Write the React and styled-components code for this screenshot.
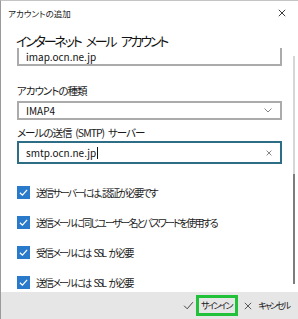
import React from 'react';
import styled, { createGlobalStyle } from 'styled-components';

const Global = createGlobalStyle`
  html, body { margin: 0; padding: 0; background: #fff; }
  body {
    font-family: "Noto Sans CJK JP", "Noto Sans", sans-serif;
    font-feature-settings: "palt";
    color: #1a1a1a;
  }
`;

const Window = styled.div`
  width: 298px;
  height: 319px;
  box-sizing: border-box;
  border-left: 1px solid #9a9a9a;
  border-top: 1px solid #c4c4c4;
  background: #fff;
  display: flex;
  flex-direction: column;
  position: relative;
  overflow: hidden;
`;

const TitleBar = styled.div`
  height: 24px;
  flex: none;
  display: flex;
  align-items: center;
  justify-content: space-between;
  padding: 0 12px 0 7px;
  font-size: 8.5px;
  color: #222;
`;

const Heading = styled.h1`
  margin: 8px 0 0 15px;
  flex: none;
  font-size: 13px;
  line-height: 15px;
  letter-spacing: -2.2px;
  word-spacing: 4.5px;
  font-weight: 400;
  color: #111;
  white-space: nowrap;
`;

const ScrollArea = styled.div`
  flex: 1;
  overflow: hidden;
  position: relative;
`;

const Content = styled.div`
  margin-top: -4px;
  padding: 0 16px 0 16px;
`;

const Field = styled.div`
  box-sizing: border-box;
  height: ${p => p.h || 20}px;
  border: 2px solid ${p => (p.focused ? '#2e6d86' : '#ababab')};
  display: flex;
  align-items: center;
  padding: ${p => p.pt || 0}px 8px 0 7px;
  font-size: 10px;
  line-height: 12px;
  color: #111;
  margin-top: ${p => p.mt || 0}px;
`;

const FieldText = styled.span`
  flex: 1;
  display: flex;
  align-items: center;
`;

const Caret = styled.span`
  width: 1px;
  height: 12px;
  background: #111;
  margin-left: 1px;
`;

const Label = styled.div`
  font-size: 10.5px;
  line-height: 14px;
  letter-spacing: -1px;
  word-spacing: 2.5px;
  margin-top: ${p => p.mt}px;
  color: #1a1a1a;
`;

const CheckList = styled.div`
  margin-top: 13px;
  display: flex;
  flex-direction: column;
`;

const CheckRow = styled.div`
  height: 30px;
  display: flex;
  align-items: center;
  gap: 6px;
  font-size: 10px;
  letter-spacing: -1.9px;
  word-spacing: 3px;
  white-space: nowrap;
`;

const Box = styled.span`
  width: 13px;
  height: 13px;
  background: #2a7acb;
  display: flex;
  align-items: center;
  justify-content: center;
  flex: none;
`;

const ScrollThumb = styled.div`
  position: absolute;
  right: 3px;
  top: ${p => p.top}px;
  height: ${p => p.len}px;
  width: 2px;
  background: ${p => p.color};
`;

const Footer = styled.div`
  height: 27px;
  flex: none;
  background: #e6e6e6;
  display: flex;
  align-items: center;
  justify-content: flex-end;
  padding-right: 9px;
  font-size: 9px;
  letter-spacing: -2px;
  color: #1a1a1a;
  white-space: nowrap;
`;

const Action = styled.div`
  display: flex;
  align-items: center;
  gap: ${p => p.gap}px;
  margin-left: ${p => p.ml || 0}px;
`;

const Highlight = styled.span`
  box-sizing: border-box;
  height: 21px;
  width: 42px;
  border: 3px solid #21c23a;
  display: flex;
  align-items: center;
  justify-content: center;
  padding-right: 2px;
`;

const Check = ({ color = '#fff', size = 9, sw = 1.4 }) => (
  <svg width={size} height={size} viewBox="0 0 10 10">
    <path d="M1 5.2 L3.8 8 L9 2" fill="none" stroke={color} strokeWidth={sw} />
  </svg>
);

const Cross = ({ size = 7, color = '#333', sw = 1 }) => (
  <svg width={size} height={size} viewBox="0 0 10 10">
    <path d="M1 1 L9 9 M9 1 L1 9" stroke={color} strokeWidth={sw} fill="none" />
  </svg>
);

const Chevron = () => (
  <svg width="8" height="5" viewBox="0 0 8 5">
    <path d="M0.5 0.5 L4 4 L7.5 0.5" fill="none" stroke="#777" strokeWidth="0.9" />
  </svg>
);

const options = [
  '送信サーバーには、認証が必要です',
  '送信メールに同じユーザー名とパスワードを使用する',
  '受信メールには SSL が必要',
  '送信メールには SSL が必要',
];

export default function App() {
  return (
    <Window>
      <Global />
      <TitleBar>
        <span>アカウントの追加</span>
        <Cross size={8} color="#333" sw={1.2} />
      </TitleBar>
      <Heading>インターネット メール アカウント</Heading>
      <ScrollArea>
        <Content>
          <Field h={22} pt={4}>
            <FieldText>imap.ocn.ne.jp</FieldText>
          </Field>
          <Label mt={18}>アカウントの種類</Label>
          <Field mt={3} h={19}>
            <FieldText>IMAP4</FieldText>
            <Chevron />
          </Field>
          <Label mt={6}>メールの送信 (SMTP) サーバー</Label>
          <Field mt={1} h={23} focused>
            <FieldText>
              smtp.ocn.ne.jp
              <Caret />
            </FieldText>
            <Cross size={6} color="#555" sw={1.2} />
          </Field>
          <CheckList>
            {options.map(o => (
              <CheckRow key={o}>
                <Box>
                  <Check />
                </Box>
                <span>{o}</span>
              </CheckRow>
            ))}
          </CheckList>
        </Content>
        <ScrollThumb top={8} len={120} color="#d6d6d6" />
        <ScrollThumb top={126} len={110} color="#7d7d7d" />
      </ScrollArea>
      <Footer>
        <Action gap={2}>
          <Check color="#444" size={11} sw={0.9} />
          <Highlight>サインイン</Highlight>
        </Action>
        <Action gap={6} ml={6}>
          <Cross size={8} color="#333" sw={1} />
          <span>キャンセル</span>
        </Action>
      </Footer>
    </Window>
  );
}
